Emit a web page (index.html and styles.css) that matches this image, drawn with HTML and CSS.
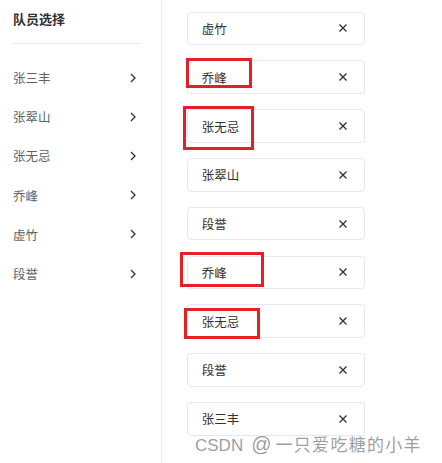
FILE: index.html
```html
<!DOCTYPE html>
<html lang="zh">
<head>
<meta charset="utf-8">
<link rel="stylesheet" href="styles.css">
</head>
<body>
<div class="page">
  <aside class="side">
    <div class="side-title">队员选择</div>
    <div class="divider"></div>
    <ul class="menu">
      <li class="menu-item"><span>张三丰</span><svg class="chev" viewBox="0 0 6 10"><path d="M1 1 L5 5 L1 9"/></svg></li>
      <li class="menu-item"><span>张翠山</span><svg class="chev" viewBox="0 0 6 10"><path d="M1 1 L5 5 L1 9"/></svg></li>
      <li class="menu-item"><span>张无忌</span><svg class="chev" viewBox="0 0 6 10"><path d="M1 1 L5 5 L1 9"/></svg></li>
      <li class="menu-item"><span>乔峰</span><svg class="chev" viewBox="0 0 6 10"><path d="M1 1 L5 5 L1 9"/></svg></li>
      <li class="menu-item"><span>虚竹</span><svg class="chev" viewBox="0 0 6 10"><path d="M1 1 L5 5 L1 9"/></svg></li>
      <li class="menu-item"><span>段誉</span><svg class="chev" viewBox="0 0 6 10"><path d="M1 1 L5 5 L1 9"/></svg></li>
    </ul>
  </aside>
  <main class="list">
    <div class="card"><span>虚竹</span><svg class="close" viewBox="0 0 8 8"><path d="M0.5 0.5 L7.5 7.5 M7.5 0.5 L0.5 7.5"/></svg></div>
    <div class="card"><span>乔峰</span><svg class="close" viewBox="0 0 8 8"><path d="M0.5 0.5 L7.5 7.5 M7.5 0.5 L0.5 7.5"/></svg><i class="mark m1"></i></div>
    <div class="card"><span>张无忌</span><svg class="close" viewBox="0 0 8 8"><path d="M0.5 0.5 L7.5 7.5 M7.5 0.5 L0.5 7.5"/></svg><i class="mark m2"></i></div>
    <div class="card"><span>张翠山</span><svg class="close" viewBox="0 0 8 8"><path d="M0.5 0.5 L7.5 7.5 M7.5 0.5 L0.5 7.5"/></svg></div>
    <div class="card"><span>段誉</span><svg class="close" viewBox="0 0 8 8"><path d="M0.5 0.5 L7.5 7.5 M7.5 0.5 L0.5 7.5"/></svg></div>
    <div class="card"><span>乔峰</span><svg class="close" viewBox="0 0 8 8"><path d="M0.5 0.5 L7.5 7.5 M7.5 0.5 L0.5 7.5"/></svg><i class="mark m3"></i></div>
    <div class="card"><span>张无忌</span><svg class="close" viewBox="0 0 8 8"><path d="M0.5 0.5 L7.5 7.5 M7.5 0.5 L0.5 7.5"/></svg><i class="mark m4"></i></div>
    <div class="card"><span>段誉</span><svg class="close" viewBox="0 0 8 8"><path d="M0.5 0.5 L7.5 7.5 M7.5 0.5 L0.5 7.5"/></svg></div>
    <div class="card"><span>张三丰</span><svg class="close" viewBox="0 0 8 8"><path d="M0.5 0.5 L7.5 7.5 M7.5 0.5 L0.5 7.5"/></svg></div>
  </main>
</div>
<div class="watermark"><span>CSDN</span><span class="wm-at">@</span><span class="wm-name">一只爱吃糖的小羊</span></div>
</body>
</html>
```

FILE: styles.css
```css
* { box-sizing: border-box; }
html, body { margin: 0; padding: 0; background: #fff; }
body {
  font-family: "Noto Sans CJK SC", "Liberation Sans", sans-serif;
  width: 442px;
  height: 463px;
  overflow: hidden;
  position: relative;
}
.page {
  display: flex;
  height: 463px;
}
.side {
  width: 162px;
  flex: none;
  border-right: 1px solid #ebeef5;
  padding: 9px 21px 0 13px;
}
.side-title {
  font-size: 13px;
  font-weight: bold;
  color: #303133;
  line-height: 20px;
}
.divider {
  height: 1px;
  background: #e4e7ed;
  margin-top: 14px;
  margin-bottom: 14px;
}
.menu {
  list-style: none;
  margin: 0;
  padding: 0;
}
.menu-item {
  display: flex;
  align-items: center;
  justify-content: space-between;
  height: 39.2px;
  font-size: 12.5px;
  color: #606266;
  padding-right: 4px;
}
.chev {
  width: 6px;
  height: 10px;
  fill: none;
  stroke: #303133;
  stroke-width: 1.3;
}
.list {
  flex: 1;
  padding: 11.7px 0 0 24.7px;
  display: flex;
  flex-direction: column;
  gap: 15.2px;
}
.card {
  position: relative;
  width: 178.5px;
  height: 33.6px;
  border: 1px solid #e4e7ed;
  border-radius: 4px;
  display: flex;
  align-items: center;
  justify-content: space-between;
  padding: 0 17px 0 14px;
  font-size: 12.5px;
  color: #303133;
}
.close {
  width: 8px;
  height: 8px;
  fill: none;
  stroke: #303133;
  stroke-width: 1.3;
}
.mark {
  position: absolute;
  border: 3px solid #e41f26;
}
.m1 { left: -1.7px; top: -3.7px; width: 66px; height: 30px; }
.m2 { left: -4.7px; top: -4.7px; width: 71px; height: 44px; }
.m3 { left: -7.7px; top: -4.7px; width: 84px; height: 35px; }
.m4 { left: -3.7px; top: 2.7px; width: 76px; height: 31px; }
.watermark {
  position: absolute;
  left: 195px;
  top: 431px;
  display: flex;
  align-items: baseline;
  font-family: "Liberation Sans", "Noto Sans CJK SC", sans-serif;
  font-size: 17px;
  color: rgba(140, 140, 140, 0.85);
  white-space: nowrap;
  text-shadow: 0 0 2px #fff;
}
.wm-at { font-size: 20px; margin: 0 4px 0 8px; }
.wm-name { letter-spacing: 1.3px; }
```
